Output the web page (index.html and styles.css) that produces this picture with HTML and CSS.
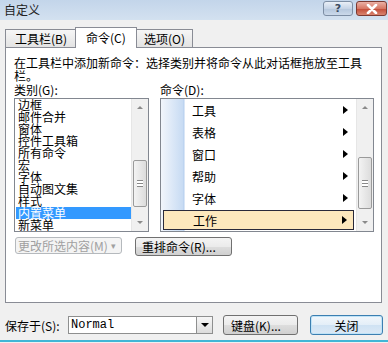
FILE: index.html
```html
<!DOCTYPE html>
<html lang="zh-CN">
<head>
    <meta charset="UTF-8">
    <title>自定义</title>
    <link rel="stylesheet" href="styles.css">
</head>
<body>
    <div class="window">
        <div class="titlebar">
            <span class="title">自定义</span>
            <span class="cap-btn help">?</span>
            <span class="cap-btn close">
                <svg width="14" height="10" viewBox="0 0 14 10"><path d="M3 1 L11 9 M11 1 L3 9" stroke="#fff" stroke-width="2.6" stroke-linecap="round"/></svg>
            </span>
        </div>

        <div class="tabs">
            <div class="tab tab-tools">工具栏(<u>B</u>)</div>
            <div class="tab tab-active">命令(<u>C</u>)</div>
            <div class="tab tab-options">选项(<u>O</u>)</div>
        </div>

        <div class="panel">
            <p class="hint">在工具栏中添加新命令：选择类别并将命令从此对话框拖放至工具栏。</p>

            <div class="columns">
                <div class="col col-left">
                    <div class="label">类别(<u>G</u>):</div>
                    <div class="listbox cat-box">
                        <ul class="cat-list">
                            <li>边框</li>
                            <li>邮件合并</li>
                            <li>窗体</li>
                            <li>控件工具箱</li>
                            <li>所有命令</li>
                            <li>宏</li>
                            <li>字体</li>
                            <li>自动图文集</li>
                            <li>样式</li>
                            <li class="selected">内置菜单</li>
                            <li>新菜单</li>
                        </ul>
                        <div class="scrollbar">
                            <span class="arrow up"></span>
                            <span class="thumb thumb-cat"><i></i></span>
                            <span class="arrow down"></span>
                        </div>
                    </div>
                </div>

                <div class="col col-right">
                    <div class="label">命令(<u>D</u>):</div>
                    <div class="listbox cmd-box">
                        <ul class="cmd-list">
                            <li>工具<span class="tri"></span></li>
                            <li>表格<span class="tri"></span></li>
                            <li>窗口<span class="tri"></span></li>
                            <li>帮助<span class="tri"></span></li>
                            <li>字体<span class="tri"></span></li>
                            <li class="selected">工作<span class="tri"></span></li>
                        </ul>
                        <div class="scrollbar">
                            <span class="arrow up"></span>
                            <span class="thumb thumb-cmd"><i></i></span>
                            <span class="arrow down"></span>
                        </div>
                    </div>
                </div>
            </div>

            <div class="actions">
                <span class="btn btn-disabled">更改所选内容(<u>M</u>) <span class="caret">▾</span></span>
                <span class="btn btn-rearrange">重排命令(<u>R</u>)...</span>
            </div>
        </div>

        <div class="footer">
            <span class="save-label">保存于(<u>S</u>):</span>
            <div class="combo">
                <span class="combo-value">Normal</span>
                <span class="combo-drop"><span class="down-tri"></span></span>
            </div>
            <span class="btn btn-foot btn-keyboard">键盘(<u>K</u>)...</span>
            <span class="btn btn-foot btn-close">关闭</span>
        </div>
        <div class="frame-edge"></div>
    </div>
</body>
</html>
```

FILE: styles.css
```css
body {
    margin: 0;
    padding: 0;
    font-family: "Noto Sans CJK SC", "DejaVu Sans", sans-serif;
    font-size: 12px;
    color: #000;
    background-color: #f0f0f0;
}

u {
    text-decoration: none;
}

ul {
    list-style: none;
    margin: 0;
    padding: 0;
}

.window {
    width: 388px;
    height: 343px;
    overflow: hidden;
    background-color: #f0f0f0;
}

/* title bar */
.titlebar {
    height: 20px;
    display: flex;
    align-items: flex-start;
    background: linear-gradient(#c3d5ea, #d3e1f0);
}

.title {
    margin: 3px 0 0 4px;
    font-size: 12px;
    line-height: 14px;
    color: #222;
    flex: 1;
}

.cap-btn {
    height: 15px;
    margin-top: 1px;
    border-radius: 3px;
    display: flex;
    align-items: center;
    justify-content: center;
    box-sizing: border-box;
}

.help {
    width: 30px;
    border: 1px solid #7d8ea4;
    background: linear-gradient(#e9eff7, #c6d4e6 50%, #b4c6dc 51%, #cbd9ea);
    color: #3a4a60;
    font-family: "DejaVu Sans", sans-serif;
    font-size: 11px;
    font-weight: bold;
    line-height: 13px;
}

.close {
    width: 31px;
    margin-left: 3px;
    margin-right: 1px;
    border: 1px solid #7b3a32;
    background: linear-gradient(#eab1a6, #d77865 50%, #c24a36 51%, #d98570);
}

/* tabs */
.tabs {
    display: flex;
    align-items: flex-end;
    height: 20px;
    margin-top: 7px;
    padding-left: 5px;
    position: relative;
    z-index: 1;
}

.tab {
    height: 18px;
    box-sizing: border-box;
    border: 1px solid #898c95;
    border-bottom: none;
    background: linear-gradient(#f6f6f6, #e3e3e3);
    font-size: 12px;
    line-height: 17px;
}

.tab-tools {
    width: 71px;
    padding-left: 9px;
}

.tab-active {
    width: 62px;
    height: 21px;
    margin-bottom: -1px;
    background: #fff;
    padding-left: 10px;
    line-height: 20px;
    margin-left: -1px;
}

.tab-options {
    width: 57px;
    padding-left: 7px;
    margin-left: -1px;
}

/* panel */
.panel {
    width: 377px;
    height: 256px;
    margin-left: 5px;
    box-sizing: border-box;
    border: 1px solid #898c95;
    background: #fff;
    padding: 8px 7px 0 8px;
}

.hint {
    margin: 0;
    width: 352px;
    line-height: 13px;
}

.label {
    line-height: 13px;
    height: 15px;
    margin-top: 1px;
}

.columns {
    display: flex;
    gap: 11px;
}

.listbox {
    height: 134px;
    box-sizing: border-box;
    border: 1px solid #828790;
    display: flex;
    background: #fff;
}

.cat-box {
    width: 135px;
}

.cat-list {
    flex: 1;
    padding: 0 0 0 1px;
}

.cat-list li {
    height: 12px;
    line-height: 12px;
    padding-left: 2px;
    white-space: nowrap;
}

.cat-list li.selected {
    background: #3399ff;
    color: #fff;
}

.cmd-box {
    width: 214px;
}

.cmd-list {
    flex: 1;
    background: linear-gradient(to right, #f2f6fc, #c7dbf3 22px, #b3cdee 23px, #fff 24px);
}

.cmd-list li {
    height: 22px;
    box-sizing: border-box;
    display: flex;
    align-items: center;
    padding: 0 8px 0 31px;
}

.cmd-list li.selected {
    margin: 1px 2px 0 2px;
    height: 20px;
    padding-left: 29px;
    padding-right: 6px;
    background: #fde8bd;
    border: 1px solid #2a2a3a;
}

.tri {
    margin-left: auto;
    width: 0;
    height: 0;
    border-top: 4px solid transparent;
    border-bottom: 4px solid transparent;
    border-left: 5px solid #000;
}

/* scrollbars */
.scrollbar {
    width: 16px;
    display: flex;
    flex-direction: column;
    align-items: center;
    background: #f0f0f0;
    border-left: 1px solid #e6e6e6;
}

.arrow {
    width: 0;
    height: 0;
    border-left: 3px solid transparent;
    border-right: 3px solid transparent;
    margin: 7px 0;
}

.arrow.up {
    border-bottom: 3px solid #8a8a8a;
}

.arrow.down {
    border-top: 3px solid #8a8a8a;
    margin-top: auto;
}

.thumb {
    width: 14px;
    box-sizing: border-box;
    border: 1px solid #9a9a9a;
    border-radius: 2px;
    background: linear-gradient(to right, #f3f3f3, #dcdcdc);
    display: flex;
    align-items: center;
    justify-content: center;
}

.thumb i {
    width: 6px;
    height: 5px;
    border-top: 1px solid #888;
    border-bottom: 1px solid #888;
    background: linear-gradient(#fff 2px, #888 2px, #888 3px, #fff 3px);
}

.thumb-cat {
    height: 47px;
    margin-top: 44px;
}

.thumb-cmd {
    height: 52px;
    margin-top: 41px;
}

/* buttons */
.actions {
    display: flex;
    gap: 13px;
    margin-top: 5px;
    margin-left: 1px;
}

.btn {
    box-sizing: border-box;
    border: 1px solid #707070;
    border-radius: 3px;
    background: linear-gradient(#f4f4f4, #ebebeb 50%, #dddddd 51%, #d0d0d0);
    display: flex;
    align-items: center;
    justify-content: center;
    white-space: nowrap;
}

.btn-disabled {
    width: 107px;
    height: 17px;
    border-color: #b5b9bd;
    background: #f4f4f4;
    color: #a0a0a0;
    justify-content: flex-start;
    padding-left: 2px;
    font-size: 12px;
}

.caret {
    margin-left: 3px;
    font-size: 9px;
}

.btn-rearrange {
    width: 97px;
    height: 19px;
    justify-content: flex-start;
    padding-left: 6px;
}

/* footer */
.footer {
    display: flex;
    align-items: center;
    height: 20px;
    margin-top: 12px;
    padding-left: 5px;
}

.save-label {
    width: 63px;
}

.combo {
    width: 145px;
    height: 18px;
    box-sizing: border-box;
    border: 1px solid #8e8f8f;
    background: #fff;
    display: flex;
    align-items: center;
}

.combo-value {
    flex: 1;
    padding-left: 2px;
    font-family: "Liberation Mono", monospace;
    font-size: 12px;
}

.combo-drop {
    width: 16px;
    height: 16px;
    box-sizing: border-box;
    border-left: 1px solid #8e8f8f;
    background: linear-gradient(#f6f6f6, #dcdcdc);
    display: flex;
    align-items: center;
    justify-content: center;
}

.down-tri {
    width: 0;
    height: 0;
    border-left: 4px solid transparent;
    border-right: 4px solid transparent;
    border-top: 4px solid #000;
}

.btn-foot {
    height: 20px;
}

.btn-keyboard {
    width: 75px;
    margin-left: 10px;
    justify-content: flex-start;
    padding-left: 7px;
}

.btn-close {
    width: 73px;
    margin-left: 12px;
    border-color: #3c7fb1;
    background: linear-gradient(#f2f7fb, #e3eef8 50%, #cfe2f3 51%, #dbe9f6);
    box-shadow: inset 0 0 0 1px #bfe3f7;
}

.frame-edge {
    height: 2px;
    margin-top: 5px;
    background: #41b6d6;
}
```
